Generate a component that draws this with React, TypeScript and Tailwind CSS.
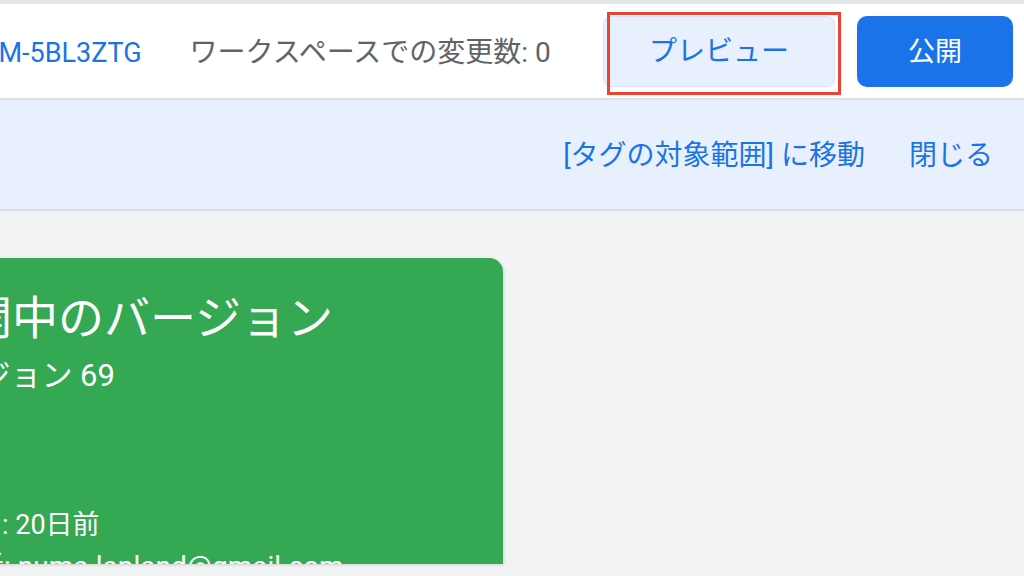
import React from 'react';

const font = "font-['Roboto','Noto_Sans_CJK_JP',sans-serif]";

const App: React.FC = () => {
  return (
    <div className={`w-[1024px] h-[576px] overflow-hidden bg-[#f1f3f4] flex flex-col ${font}`}>
      {/* top edge */}
      <div className="h-[4px] bg-[#e4e6e9] shrink-0" />

      {/* Header */}
      <header className="h-[96px] shrink-0 bg-white border-b-2 border-[#dfe1e5] flex items-center justify-between pr-[11px]">
        <div className="flex items-center gap-[48px] ml-[-36px] pt-[4px]">
          <span className="text-[27px] text-[#1a73e8] whitespace-nowrap">GTM-5BL3ZTG</span>
          <span className="text-[28px] text-[#5f6368] whitespace-nowrap">ワークスペースでの変更数: 0</span>
        </div>
        <div className="flex items-center gap-[22px]">
          <div className="relative">
            <button className="w-[232px] h-[71px] rounded-lg bg-[#e8f0fe] border border-[#d6e4fb] text-[28px] text-[#1a73e8] pt-[2px]">
              プレビュー
            </button>
            {/* highlight box */}
            <div className="absolute left-[4px] top-[-4px] w-[234px] h-[83px] border-[3px] border-[#ea4335] pointer-events-none" />
          </div>
          <button className="w-[156px] h-[71px] rounded-[10px] bg-[#1a73e8] text-[27px] text-white pt-[2px]">
            公開
          </button>
        </div>
      </header>

      {/* Banner */}
      <div className="h-[111px] shrink-0 bg-[#e8f0fe] border-b-2 border-[#dadce0] flex items-center justify-end gap-[44px] pr-[31px] pt-[2px]">
        <span className="text-[28px] text-[#1a73e8] whitespace-nowrap">[タグの対象範囲] に移動</span>
        <span className="text-[28px] text-[#1a73e8] whitespace-nowrap">閉じる</span>
      </div>

      {/* Content */}
      <div className="flex-1 pt-[47px]">
        <div className="ml-[-200px] w-[703px] h-[306px] overflow-hidden rounded-tr-[14px] bg-[#34a853] shadow-[1px_1px_3px_rgba(0,0,0,0.15)] text-white pl-[124px] pt-[32px] flex flex-col">
          <div className="text-[46px] leading-[56px] ml-[-4px] whitespace-nowrap">公開中のバージョン</div>
          <div className="text-[31px] leading-[40px] mt-[10px] ml-[-6px] whitespace-nowrap">バージョン 69</div>
          <div className="text-[27px] leading-[42px] mt-[108px] ml-[-3px] whitespace-nowrap">公開日: 20日前</div>
          <div className="text-[28px] leading-[42px] ml-[-4px] whitespace-nowrap">作成者: numa.lapland@gmail.com</div>
        </div>
      </div>
    </div>
  );
};

export default App;
